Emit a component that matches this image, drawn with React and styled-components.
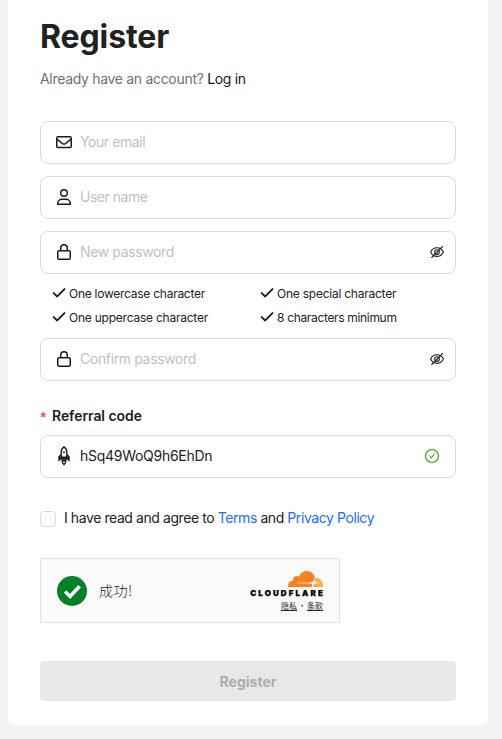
import React from "react";
import styled, { createGlobalStyle } from "styled-components";
import { AiOutlineCheckCircle } from "react-icons/ai";

const GlobalStyle = createGlobalStyle`
  * { box-sizing: border-box; }
  body {
    margin: 0;
    background: #f4f4f6;
    color: #212121;
    font-family: "Inter", "Noto Sans CJK SC", sans-serif;
    font-size: 14px;
  }
  svg { display: block; flex: none; }
`;

const Card = styled.main`
  width: 480px;
  height: 725px;
  margin-left: 8px;
  padding: 17px 32px 24px;
  background: #fff;
  border-radius: 0 0 8px 8px;
  display: flex;
  flex-direction: column;
`;

const Title = styled.h1`
  margin: 0;
  font-size: 32px;
  line-height: 40px;
  font-weight: 700;
  letter-spacing: -0.1px;
`;

const Subtitle = styled.p`
  margin: 11px 0 31px;
  line-height: 22px;
  color: #6d7079;
  letter-spacing: -0.31px;
`;

const LoginLink = styled.a`
  color: #171717;
`;

const Field = styled.label`
  flex: none;
  display: flex;
  align-items: center;
  gap: 8px;
  height: 43px;
  margin-bottom: 12px;
  padding: 0 ${(p) => p.$right || 11}px 2px 15px;
  border: 1px solid #d9d9d9;
  border-radius: 8px;
  color: #1a1b29;
`;

const Input = styled.input`
  flex: 1;
  min-width: 0;
  height: 22px;
  padding: 0;
  border: 0;
  outline: 0;
  background: transparent;
  color: #212121;
  font: inherit;
  letter-spacing: ${(p) => p.$spacing || 0}px;
  &::placeholder { color: #bfbfbf; }
`;

const Rules = styled.ul`
  list-style: none;
  margin: -5px 0 9px;
  padding: 0 0 0 12px;
  display: grid;
  grid-template-columns: 208px 1fr;
  grid-auto-rows: 24px;
`;

const Rule = styled.li`
  display: flex;
  align-items: center;
  gap: 3px;
  font-size: 12px;
  letter-spacing: ${(p) => p.$spacing}px;
`;

const FieldLabel = styled.div`
  display: flex;
  gap: 5px;
  height: 22px;
  margin: 12px 0 8px -1px;
  line-height: 22px;
  font-weight: 600;
  letter-spacing: -0.06px;
`;

const Required = styled.span`
  width: 8px;
  padding-top: 3px;
  color: #ff4d4f;
  font-family: "Liberation Mono", monospace;
  font-size: 14px;
  font-weight: 700;
`;

const Agreement = styled.label`
  display: flex;
  align-items: center;
  gap: 8px;
  height: 22px;
  margin: 18px 0 31px;
  letter-spacing: -0.42px;
`;

const AgreementText = styled.span`
  padding-bottom: 1px;
`;

const Checkbox = styled.input`
  appearance: none;
  width: 16px;
  height: 16px;
  margin: 3px 0 0;
  border: 1px solid #d9d9d9;
  border-radius: 4px;
  background: #fff;
`;

const PolicyLink = styled.a`
  color: #1c6bff;
`;

const Turnstile = styled.section`
  flex: none;
  width: 300px;
  height: 65px;
  margin-bottom: 38px;
  padding: 0 16px;
  display: flex;
  align-items: center;
  gap: 12px;
  border: 1px solid #e0e0e0;
  background: #fafafa;
  color: #232323;
`;

const Status = styled.span`
  flex: 1;
  padding-bottom: 2px;
  font-family: "Noto Sans CJK SC", sans-serif;
  font-weight: 300;
  font-size: 14px;
  line-height: 20px;
  letter-spacing: 0.5px;
`;

const Brand = styled.div`
  display: flex;
  flex-direction: column;
  align-items: flex-end;
  padding-top: 2px;
`;

const BrandName = styled.div`
  height: 10px;
  margin: 1px -2px 2px 0;
  color: #000;
  font-size: 8px;
  line-height: 10px;
  font-weight: 900;
  letter-spacing: 2.1px;
  -webkit-text-stroke: 0.25px #000;
`;

const BrandLinks = styled.div`
  display: flex;
  gap: 1px;
  font-family: "Noto Sans CJK SC", sans-serif;
  font-size: 8px;
  line-height: 12px;
`;

const BrandLink = styled.a`
  text-decoration: underline;
`;

const SubmitButton = styled.button`
  flex: none;
  height: 40px;
  border: 0;
  border-radius: 4px;
  background: #e8e8e8;
  color: #adadad;
  font: 700 14px "Inter", sans-serif;
`;

const MailIcon = () => (
  <svg width="16" height="16" viewBox="0 0 16 16" fill="none" stroke="currentColor" strokeWidth="1.5">
    <rect x="0.75" y="2.75" width="14.5" height="10.8" rx="1.4" />
    <path d="M1 5.2 6.6 9.6Q8 10.6 9.4 9.6L15 5.2" />
  </svg>
);

const UserIcon = () => (
  <svg width="16" height="16" viewBox="0 0 16 16" fill="none" stroke="currentColor" strokeWidth="1.5">
    <circle cx="8" cy="4" r="3.25" />
    <path d="M1.75 15.25v-.8a4.2 4.2 0 0 1 4.2-4.2h4.1a4.2 4.2 0 0 1 4.2 4.2v.8z" strokeLinejoin="round" />
  </svg>
);

const LockIcon = () => (
  <svg width="16" height="16" viewBox="0 0 16 16" fill="none" stroke="currentColor" strokeWidth="1.5">
    <rect x="1.75" y="6.75" width="12.5" height="8.5" rx="1.3" />
    <path d="M4.75 6.5V4a3.25 3.25 0 0 1 6.5 0v2.5" />
  </svg>
);

const EyeOffIcon = () => (
  <svg width="14" height="14" viewBox="0 0 14 14" fill="none" stroke="currentColor" strokeWidth="1.1">
    <path d="M.6 7.1C2 4 4.2 2.8 7 2.8s5 1.2 6.4 4.3C12 10.2 9.8 11.4 7 11.4S2 10.2.6 7.1z" />
    <circle cx="7" cy="7.1" r="2.3" />
    <path d="M1.5 12.8 12.9 1.2" strokeWidth="1.2" />
  </svg>
);

const RocketIcon = () => (
  <svg width="16" height="20" viewBox="0 0 16 20" fill="none" stroke="currentColor" strokeWidth="1.4">
    <path d="M5.2 12.6V6.2C5.2 3.8 6.3 2 8 .9c1.7 1.1 2.8 2.9 2.8 5.3v6.4z" />
    <path d="M4.8 7.7 2.3 10.6v5l2.5-1.9zM11.2 7.7l2.5 2.9v5l-2.5-1.9zM5 10.5h6v3.3H5z" fill="currentColor" stroke="none" />
    <circle cx="8" cy="6.2" r=".9" fill="currentColor" stroke="none" />
    <path d="M6.2 14.8c0 1.8.6 3 1.8 3.9 1.2-.9 1.8-2.1 1.8-3.9z" />
  </svg>
);

const TickIcon = () => (
  <svg width="14" height="12" viewBox="0 0 14 12" fill="none" stroke="#1a1b29" strokeWidth="1.9">
    <path d="M1.7 6.1 5.1 9.5 12.5 2.1" strokeLinecap="round" />
  </svg>
);

const SuccessIcon = () => (
  <svg width="30" height="30" viewBox="0 0 30 30">
    <circle cx="15" cy="15" r="15" fill="#038127" />
    <path d="m8 15.5 5.1 5L22.6 10.3" fill="none" stroke="#fff" strokeWidth="3.5" />
  </svg>
);

const CloudIcon = () => (
  <svg width="35" height="16" viewBox="0 6.5 24 11">
    <path fill="#f6821f" d="M16.5088 16.8447c.1475-.5068.0908-.9707-.1553-1.3154-.2246-.3164-.6045-.499-1.0615-.5205l-8.6592-.1123a.1559.1559 0 0 1-.1333-.0713c-.0283-.042-.0351-.0986-.021-.1553.0278-.084.1123-.1484.2036-.1562l8.7359-.1123c1.0351-.0489 2.1601-.8868 2.5537-1.9136l.499-1.3013c.0215-.0561.0293-.1128.0147-.168-.5625-2.5463-2.835-4.4453-5.5499-4.4453-2.5039 0-4.6284 1.6177-5.3876 3.8614-.4927-.3658-1.1187-.5625-1.794-.499-1.2026.119-2.1665 1.083-2.2861 2.2856-.0283.31-.0069.6128.0635.894C1.5683 13.171 0 14.7754 0 16.752c0 .1748.0142.3515.0352.5273.0141.083.0844.1475.1689.1475h15.9814c.0909 0 .1758-.0645.2032-.1553z" />
    <path fill="#fbad41" d="M19.2656 11.2813c-.0771 0-.1611 0-.2383.0112-.0566 0-.1054.0415-.127.0976l-.3378 1.1744c-.1475.5068-.0918.9707.1543 1.3164.2256.3164.6055.498 1.0625.5195l1.8437.1133c.0557 0 .1055.0263.1329.0703.0283.043.0351.1074.0214.1562-.0283.084-.1132.1485-.204.1553l-1.921.1123c-1.041.0488-2.1582.8867-2.5527 1.914l-.1406.3585c-.0283.0713.0215.1416.0986.1416h6.5977c.0771 0 .1474-.0489.169-.126.1122-.4082.1757-.837.1757-1.2803 0-2.6025-2.125-4.727-4.7344-4.727" />
  </svg>
);

const RULES = [
  ["One lowercase character", -0.26],
  ["One special character", -0.24],
  ["One uppercase character", -0.23],
  ["8 characters minimum", -0.33],
];

export default function App() {
  return (
    <>
      <GlobalStyle />
      <Card>
        <Title>Register</Title>
        <Subtitle>
          Already have an account? <LoginLink>Log in</LoginLink>
        </Subtitle>
        <Field>
          <MailIcon />
          <Input placeholder="Your email" $spacing={-0.42} />
        </Field>
        <Field>
          <UserIcon />
          <Input placeholder="User name" $spacing={-0.48} />
        </Field>
        <Field>
          <LockIcon />
          <Input type="password" placeholder="New password" $spacing={-0.38} />
          <EyeOffIcon />
        </Field>
        <Rules>
          {RULES.map(([text, spacing]) => (
            <Rule key={text} $spacing={spacing}>
              <TickIcon />
              {text}
            </Rule>
          ))}
        </Rules>
        <Field>
          <LockIcon />
          <Input type="password" placeholder="Confirm password" $spacing={-0.36} />
          <EyeOffIcon />
        </Field>
        <FieldLabel>
          <Required>*</Required>Referral code
        </FieldLabel>
        <Field $right={15}>
          <RocketIcon />
          <Input defaultValue="hSq49WoQ9h6EhDn" $spacing={-0.28} />
          <AiOutlineCheckCircle size={16} color="#3aa612" />
        </Field>
        <Agreement>
          <Checkbox type="checkbox" />
          <AgreementText>
            I have read and agree to <PolicyLink>Terms</PolicyLink> and <PolicyLink>Privacy Policy</PolicyLink>
          </AgreementText>
        </Agreement>
        <Turnstile>
          <SuccessIcon />
          <Status>成功!</Status>
          <Brand>
            <CloudIcon />
            <BrandName>CLOUDFLARE</BrandName>
            <BrandLinks>
              <BrandLink>隐私</BrandLink>
              <span>•</span>
              <BrandLink>条款</BrandLink>
            </BrandLinks>
          </Brand>
        </Turnstile>
        <SubmitButton disabled>Register</SubmitButton>
      </Card>
    </>
  );
}
